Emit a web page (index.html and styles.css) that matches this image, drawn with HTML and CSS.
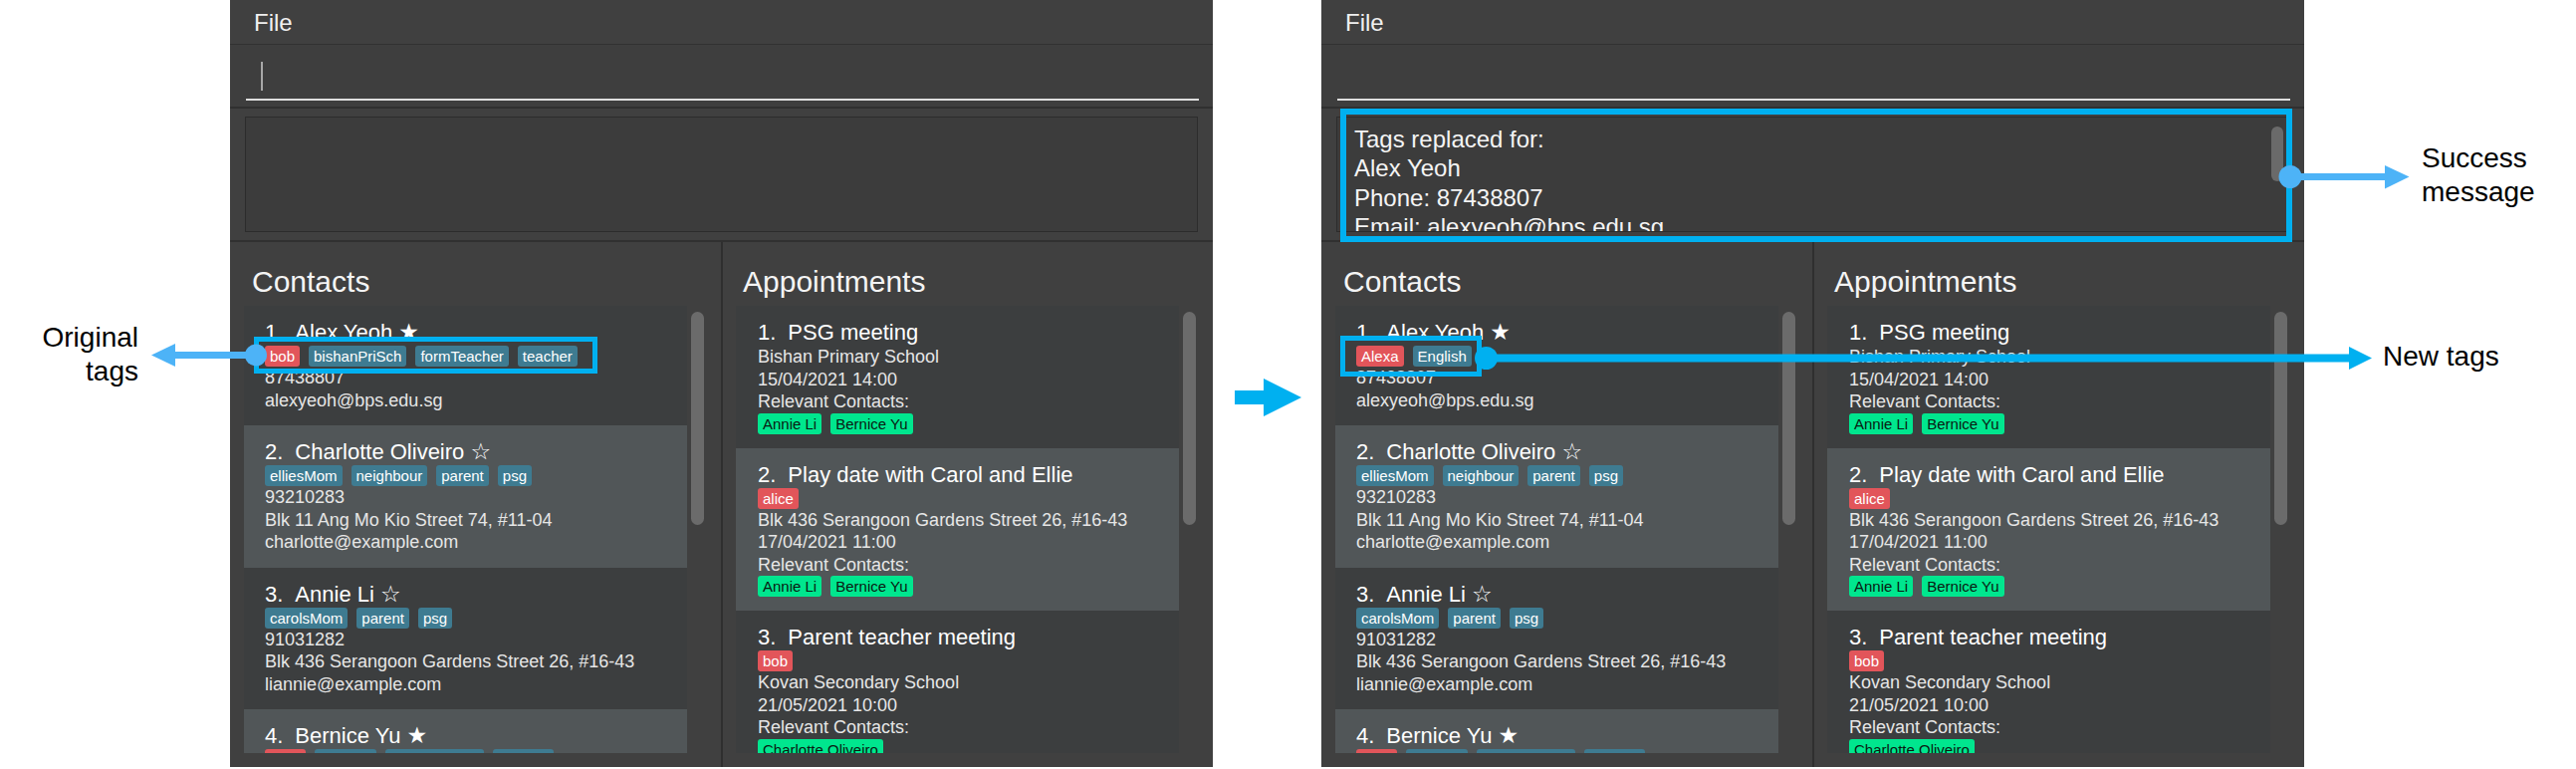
FILE: index.html
```html
<!DOCTYPE html>
<html lang="en">
<head>
<meta charset="utf-8">
<title>Tag replace</title>
<link rel="stylesheet" href="styles.css">
</head>
<body>
<div class="stage">
  <div class="note-left"><p class="note">Original<br>tags</p></div>

  <section class="app">
    <div class="menubar"><span class="menu">File</span></div>
    <div class="command"><div class="field"><span class="caret"></span></div></div>
    <div class="result"><div class="result-box"><div class="result-text"></div></div></div>
    <div class="lists">
      <div class="panel contacts">
        <h2 class="panel-title">Contacts</h2>
        <div class="list-wrap">
          <div class="list">
            <div class="card odd">
              <div class="name-line"><span class="idx">1.</span>Alex Yeoh <span class="star">★</span></div>
              <div class="tags"><span class="tag red">bob</span><span class="tag">bishanPriSch</span><span class="tag">formTeacher</span><span class="tag">teacher</span></div>
              <div class="detail">87438807</div>
              <div class="detail">alexyeoh@bps.edu.sg</div>
            </div>
            <div class="card even">
              <div class="name-line"><span class="idx">2.</span>Charlotte Oliveiro <span class="star">☆</span></div>
              <div class="tags"><span class="tag">elliesMom</span><span class="tag">neighbour</span><span class="tag">parent</span><span class="tag">psg</span></div>
              <div class="detail">93210283</div>
              <div class="detail">Blk 11 Ang Mo Kio Street 74, #11-04</div>
              <div class="detail">charlotte@example.com</div>
            </div>
            <div class="card odd">
              <div class="name-line"><span class="idx">3.</span>Annie Li <span class="star">☆</span></div>
              <div class="tags"><span class="tag">carolsMom</span><span class="tag">parent</span><span class="tag">psg</span></div>
              <div class="detail">91031282</div>
              <div class="detail">Blk 436 Serangoon Gardens Street 26, #16-43</div>
              <div class="detail">liannie@example.com</div>
            </div>
            <div class="card even">
              <div class="name-line"><span class="idx">4.</span>Bernice Yu <span class="star">★</span></div>
              <div class="tags"><span class="tag red">alice</span><span class="tag">dancing</span><span class="tag">bishanPriSch</span><span class="tag">cousins</span></div>
            </div>
          </div>
          <div class="scroll"><div class="thumb"></div></div>
        </div>
      </div>
      <div class="panel appts">
        <h2 class="panel-title">Appointments</h2>
        <div class="list-wrap">
          <div class="list">
            <div class="card odd appt">
              <div class="name-line"><span class="idx">1.</span>PSG meeting</div>
              <div class="detail">Bishan Primary School</div>
              <div class="detail">15/04/2021 14:00</div>
              <div class="detail">Relevant Contacts:</div>
              <div class="tags"><span class="tag green">Annie Li</span><span class="tag green">Bernice Yu</span></div>
            </div>
            <div class="card even appt">
              <div class="name-line"><span class="idx">2.</span>Play date with Carol and Ellie</div>
              <div class="tags"><span class="tag red">alice</span></div>
              <div class="detail">Blk 436 Serangoon Gardens Street 26, #16-43</div>
              <div class="detail">17/04/2021 11:00</div>
              <div class="detail">Relevant Contacts:</div>
              <div class="tags"><span class="tag green">Annie Li</span><span class="tag green">Bernice Yu</span></div>
            </div>
            <div class="card odd appt">
              <div class="name-line"><span class="idx">3.</span>Parent teacher meeting</div>
              <div class="tags"><span class="tag red">bob</span></div>
              <div class="detail">Kovan Secondary School</div>
              <div class="detail">21/05/2021 10:00</div>
              <div class="detail">Relevant Contacts:</div>
              <div class="tags"><span class="tag green">Charlotte Oliveiro</span></div>
            </div>
          </div>
          <div class="scroll"><div class="thumb"></div></div>
        </div>
      </div>
    </div>
  </section>

  <div class="gap"></div>

  <section class="app">
    <div class="menubar"><span class="menu">File</span></div>
    <div class="command"><div class="field"></div></div>
    <div class="result">
      <div class="result-box">
        <div class="result-text">Tags replaced for:<br>Alex Yeoh<br>Phone: 87438807<br>Email: alexyeoh@bps.edu.sg</div>
        <div class="vbar"></div>
      </div>
    </div>
    <div class="lists">
      <div class="panel contacts">
        <h2 class="panel-title">Contacts</h2>
        <div class="list-wrap">
          <div class="list">
            <div class="card odd">
              <div class="name-line"><span class="idx">1.</span>Alex Yeoh <span class="star">★</span></div>
              <div class="tags"><span class="tag red">Alexa</span><span class="tag">English</span></div>
              <div class="detail">87438807</div>
              <div class="detail">alexyeoh@bps.edu.sg</div>
            </div>
            <div class="card even">
              <div class="name-line"><span class="idx">2.</span>Charlotte Oliveiro <span class="star">☆</span></div>
              <div class="tags"><span class="tag">elliesMom</span><span class="tag">neighbour</span><span class="tag">parent</span><span class="tag">psg</span></div>
              <div class="detail">93210283</div>
              <div class="detail">Blk 11 Ang Mo Kio Street 74, #11-04</div>
              <div class="detail">charlotte@example.com</div>
            </div>
            <div class="card odd">
              <div class="name-line"><span class="idx">3.</span>Annie Li <span class="star">☆</span></div>
              <div class="tags"><span class="tag">carolsMom</span><span class="tag">parent</span><span class="tag">psg</span></div>
              <div class="detail">91031282</div>
              <div class="detail">Blk 436 Serangoon Gardens Street 26, #16-43</div>
              <div class="detail">liannie@example.com</div>
            </div>
            <div class="card even">
              <div class="name-line"><span class="idx">4.</span>Bernice Yu <span class="star">★</span></div>
              <div class="tags"><span class="tag red">alice</span><span class="tag">dancing</span><span class="tag">bishanPriSch</span><span class="tag">cousins</span></div>
            </div>
          </div>
          <div class="scroll"><div class="thumb"></div></div>
        </div>
      </div>
      <div class="panel appts">
        <h2 class="panel-title">Appointments</h2>
        <div class="list-wrap">
          <div class="list">
            <div class="card odd appt">
              <div class="name-line"><span class="idx">1.</span>PSG meeting</div>
              <div class="detail">Bishan Primary School</div>
              <div class="detail">15/04/2021 14:00</div>
              <div class="detail">Relevant Contacts:</div>
              <div class="tags"><span class="tag green">Annie Li</span><span class="tag green">Bernice Yu</span></div>
            </div>
            <div class="card even appt">
              <div class="name-line"><span class="idx">2.</span>Play date with Carol and Ellie</div>
              <div class="tags"><span class="tag red">alice</span></div>
              <div class="detail">Blk 436 Serangoon Gardens Street 26, #16-43</div>
              <div class="detail">17/04/2021 11:00</div>
              <div class="detail">Relevant Contacts:</div>
              <div class="tags"><span class="tag green">Annie Li</span><span class="tag green">Bernice Yu</span></div>
            </div>
            <div class="card odd appt">
              <div class="name-line"><span class="idx">3.</span>Parent teacher meeting</div>
              <div class="tags"><span class="tag red">bob</span></div>
              <div class="detail">Kovan Secondary School</div>
              <div class="detail">21/05/2021 10:00</div>
              <div class="detail">Relevant Contacts:</div>
              <div class="tags"><span class="tag green">Charlotte Oliveiro</span></div>
            </div>
          </div>
          <div class="scroll"><div class="thumb"></div></div>
        </div>
      </div>
    </div>
  </section>

  <div class="note-right">
    <p class="note success">Success<br>message</p>
    <p class="note newtags">New tags</p>
  </div>

  <svg class="overlay" width="2587" height="772" viewBox="0 0 2587 772" aria-hidden="true">
    <!-- original tags -->
    <rect x="257.5" y="340.5" width="340" height="32" fill="none" stroke="#00b0f0" stroke-width="5"/>
    <rect x="174" y="353" width="83" height="7" fill="#4db3f7"/>
    <polygon points="152,356.5 176,345 176,368" fill="#4db3f7"/>
    <circle cx="257" cy="356.5" r="11" fill="#4db3f7"/>
    <!-- between windows -->
    <rect x="1240" y="392" width="30" height="14" fill="#00b0f0"/>
    <polygon points="1269,380 1307,399 1269,418" fill="#00b0f0"/>
    <!-- success message -->
    <rect x="1349" y="112" width="950" height="128" fill="none" stroke="#00b0f0" stroke-width="6"/>
    <rect x="2300" y="174" width="96" height="7" fill="#4db3f7"/>
    <polygon points="2395,166 2419.5,177.5 2395,189.5" fill="#4db3f7"/>
    <circle cx="2300" cy="177.5" r="11.5" fill="#4db3f7"/>
    <!-- new tags -->
    <rect x="1348.5" y="339.5" width="137" height="36" fill="none" stroke="#00b0f0" stroke-width="5"/>
    <rect x="1492" y="355.5" width="868" height="8" fill="#00b0f0"/>
    <polygon points="2359,348 2382,359.5 2359,371" fill="#00b0f0"/>
    <circle cx="1492.5" cy="359.5" r="11.5" fill="#00b0f0"/>
  </svg>
</div>
</body>
</html>
```

FILE: styles.css
```css
* { box-sizing: border-box; }

html, body {
  margin: 0;
  padding: 0;
  background: #ffffff;
}

body {
  font-family: "Liberation Sans", Arial, sans-serif;
}

.stage {
  position: relative;
  display: flex;
  width: 2587px;
  height: 772px;
  overflow: hidden;
}

/* annotations */
.note {
  margin: 0;
  font-size: 28px;
  line-height: 33.6px;
  color: #000;
}

.note-left {
  width: 231px;
  flex: none;
  padding-top: 322px;
  padding-right: 92px;
  text-align: right;
}

.gap {
  width: 109px;
  flex: none;
}

.note-right {
  width: 273px;
  flex: none;
  padding-top: 142px;
}

.note-right .success {
  margin-left: 118px;
}

.note-right .newtags {
  margin-left: 79px;
  margin-top: 132px;
}

.overlay {
  position: absolute;
  left: 0;
  top: 0;
  pointer-events: none;
}

/* app window */
.app {
  width: 987px;
  height: 770px;
  flex: none;
  display: flex;
  flex-direction: column;
  background: #404040;
  color: #f2f2f2;
}

.menubar {
  height: 45px;
  flex: none;
  padding: 2px 0 0 24px;
  border-bottom: 1px solid #313131;
  font-size: 24px;
  line-height: 42px;
  color: #f0f0f0;
}

.command {
  height: 64px;
  flex: none;
  padding: 0 14px 0 16px;
  border-bottom: 2px solid #303030;
  background: #3e3e3e;
}

.field {
  height: 56px;
  border-bottom: 2px solid #dedede;
  padding: 17px 0 0 15px;
}

.caret {
  display: block;
  width: 2px;
  height: 29px;
  background: #a8a8a8;
}

.result {
  height: 134px;
  flex: none;
  padding: 8px 15px;
  border-bottom: 2px solid #303030;
}

.result-box {
  height: 116px;
  border: 1px solid #2c2c2c;
  background: #3c3c3c;
  display: flex;
  padding: 7px 5px 0 17px;
  overflow: hidden;
}

.result-text {
  flex: 1;
  font-size: 24px;
  line-height: 29.3px;
  color: #f4f4f4;
  white-space: nowrap;
}

.vbar {
  width: 12px;
  height: 55px;
  margin-top: 2px;
  border-radius: 6px;
  background: #6a6a6a;
  flex: none;
}

.lists {
  flex: 1;
  display: flex;
  min-height: 0;
}

.panel {
  display: flex;
  flex-direction: column;
  padding: 22px 17px 14px 14px;
}

.panel.contacts {
  width: 493px;
}

.panel.appts {
  width: 494px;
  border-left: 2px solid #2f2f2f;
  padding-left: 13px;
}

.panel-title {
  margin: 0 0 6px 8px;
  font-size: 30px;
  line-height: 36px;
  font-weight: normal;
  color: #f4f4f4;
}

.panel.appts .panel-title {
  margin-left: 7px;
}

.list-wrap {
  flex: 1;
  min-height: 0;
  display: flex;
  gap: 4px;
}

.list {
  width: 445px;
  flex: none;
  overflow: hidden;
}

.scroll {
  width: 13px;
  flex: none;
}

.thumb {
  margin-top: 6px;
  height: 214px;
  border-radius: 6.5px;
  background: #6b6b6b;
}

/* cards */
.card {
  padding: 13px 21px 14px;
}

.card.appt {
  padding-left: 22px;
}

.card.odd {
  background: #3c3e3f;
}

.card.even {
  background: #515658;
}

.name-line {
  height: 27px;
  font-size: 22px;
  line-height: 27px;
  color: #ffffff;
  white-space: nowrap;
}

.idx {
  margin-right: 12px;
}

.star {
  font-family: "DejaVu Sans", sans-serif;
  font-size: 23px;
}

.detail {
  font-size: 18px;
  line-height: 22.5px;
  color: #e6e6e6;
  white-space: nowrap;
}

.tags {
  display: flex;
  gap: 9px;
  height: 21px;
}

.tag {
  font-size: 15px;
  line-height: 21px;
  padding: 0 5px;
  border-radius: 3px;
  background: #3e7b91;
  color: #ffffff;
  white-space: nowrap;
}

.tag.red {
  background: #e2555a;
}

.tag.green {
  background: #00e68e;
  color: #0a1a12;
}
```
